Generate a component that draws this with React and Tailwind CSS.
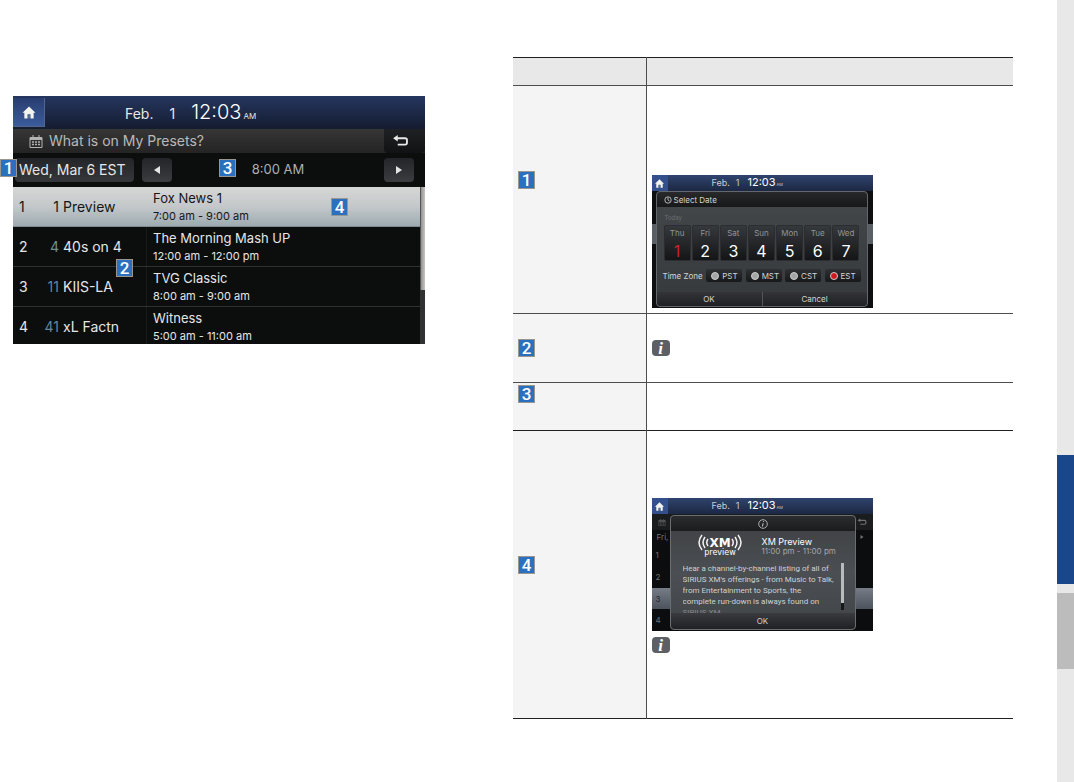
import React, { useState } from 'react';

const presets = [
  { id: 1, channel: 1, name: 'Preview', title: 'Fox News 1', time: '7:00 am - 9:00 am' },
  { id: 2, channel: 4, name: '40s on 4', title: 'The Morning Mash UP', time: '12:00 am - 12:00 pm' },
  { id: 3, channel: 11, name: 'KIIS-LA', title: 'TVG Classic', time: '8:00 am - 9:00 am' },
  { id: 4, channel: 41, name: 'xL Factn', title: 'Witness', time: '5:00 am - 11:00 am' },
];

const days = ['Thu', 'Fri', 'Sat', 'Sun', 'Mon', 'Tue', 'Wed'];
const zones = ['PST', 'MST', 'CST', 'EST'];

const Badge = ({ n, className = '' }) => (
  <span
    className={`flex h-[18px] w-[17px] items-center justify-center border border-[#999591] bg-[#2b70bf] font-['Roboto',sans-serif] text-[17px] leading-none font-medium text-white ${className}`}
  >
    {n}
  </span>
);

const InfoIcon = () => (
  <span className="flex h-4 w-[18px] items-center justify-center rounded bg-[#5c6064] font-['Liberation_Serif',serif] text-[17px] leading-none font-bold text-white italic">
    i
  </span>
);

const HomeIcon = ({ className }) => (
  <svg viewBox="0 0 14 14" className={className}>
    <path d="M7 0.5 L14 7.2 H12 V13.5 H8.6 V9 H5.4 V13.5 H2 V7.2 H0 Z" fill="#f4f4ee" />
    <path d="M5.8 9.3 H8.2 V13.5 H5.8 Z" fill="#59708e" />
  </svg>
);

const CalendarIcon = ({ className }) => (
  <svg viewBox="0 0 14 13" className={className} fill="none" stroke="#b4b4b4">
    <path d="M1 2.5 H13 V12.5 H1 Z" />
    <path d="M1 4 H13" strokeWidth="2" />
    <path d="M4 0 V3 M10 0 V3" />
    <path d="M3 7 H5 M6 7 H8 M9 7 H11 M3 9.5 H5 M6 9.5 H8 M9 9.5 H11" strokeWidth="1.3" />
  </svg>
);

const BackIcon = ({ className }) => (
  <svg viewBox="0 0 18 13" className={className} fill="none" stroke="currentColor" strokeWidth="2">
    <path d="M3 3.5 H14 Q16 3.5 16 5.5 V8.5 Q16 10.5 14 10.5 H6" />
    <path d="M6 0 L1 3.5 L6 7 Z" fill="currentColor" stroke="none" />
  </svg>
);

const SmallHeader = () => (
  <div className="flex h-4 items-center bg-linear-to-b from-[#30446e] to-[#1c2843] text-[#c5cbd9]">
    <button aria-label="Home" className="flex h-full w-4 items-center justify-center bg-[#34508c]">
      <HomeIcon className="h-[9px] w-[9px]" />
    </button>
    <div className="flex flex-1 items-baseline pl-[44px] text-[9px] leading-4">
      <span>Feb.</span>
      <span className="ml-[6px]">1</span>
      <span className="ml-[8px] text-[11px] text-white">12:03</span>
      <span className="ml-px text-[4px]">AM</span>
    </div>
  </div>
);

const PresetsScreen = () => (
  <div className="relative bg-[#0c0d0d] text-[#e6e6e6]">
    <header className="flex h-[33px] bg-linear-to-b from-[#25365f] to-[#141c30]">
      <button
        aria-label="Home"
        className="mt-[2px] flex h-[29px] w-8 items-center justify-center border-r border-b border-[#53658f] bg-linear-to-b from-[#293e70] to-[#3a5b9d]"
      >
        <HomeIcon className="h-[13px] w-[14px]" />
      </button>
      <div className="flex flex-1 items-baseline pl-[80px] leading-[33px]">
        <span className="text-sm">Feb.</span>
        <span className="ml-4 text-sm">1</span>
        <span className="ml-4 text-[20px] font-light text-white">12:03</span>
        <span className="ml-[2px] text-[8px]">AM</span>
      </div>
    </header>

    <div className="flex h-6 items-center bg-linear-to-b from-[#363636] to-[#242424] pl-4">
      <CalendarIcon className="h-[13px] w-[14px]" />
      <h1 className="ml-[6px] flex-1 text-sm text-[#b9b9b9]">What is on My Presets?</h1>
      <button
        aria-label="Back"
        className="flex h-6 w-[41px] items-center justify-center rounded-b bg-linear-to-b from-[#202124] to-[#111214] pr-2 text-[#e8e8e8]"
      >
        <BackIcon className="h-3 w-[17px]" />
      </button>
    </div>

    <div className="flex h-[34px] items-center pl-[2px] pr-[11px]">
      <button className="h-6 w-[119px] rounded bg-linear-to-b from-[#242528] to-[#36373a] pl-1 text-left text-sm">
        Wed, Mar 6 EST
      </button>
      <button
        aria-label="Earlier"
        className="ml-2 flex h-6 w-[30px] items-center justify-center rounded bg-linear-to-b from-[#242528] to-[#3c3d40]"
      >
        <svg viewBox="0 0 6 8" className="h-2 w-[6px]"><path d="M6 0 V8 L0 4 Z" fill="#e4e4e4" /></svg>
      </button>
      <span className="flex-1 text-center text-[13px] text-[#aeb0b2]">8:00 AM</span>
      <button
        aria-label="Later"
        className="flex h-6 w-[30px] items-center justify-center rounded bg-linear-to-b from-[#242528] to-[#3c3d40]"
      >
        <svg viewBox="0 0 6 8" className="h-2 w-[6px]"><path d="M0 0 V8 L6 4 Z" fill="#e4e4e4" /></svg>
      </button>
    </div>

    <div className="flex h-[157px] overflow-hidden">
      <table className="flex-1 border-collapse">
        <tbody className="block w-full">
          {presets.map((p, i) => (
            <tr
              key={p.id}
              className={`flex h-10 w-full border-b ${
                i === 0
                  ? 'border-[#7f8b91] bg-linear-to-b from-[#d6d6d5] via-[#c4c8ca] to-[#9eabb1] text-[#161616]'
                  : 'border-[#303232] text-[#e6e6e6]'
              }`}
            >
              <td className="w-6 pt-[10px] pl-[6px] text-sm">{p.id}</td>
              <td className={`w-[22px] pt-[10px] text-right text-sm ${i === 0 ? '' : i === 1 ? 'text-[#70908f]' : 'text-[#6086a0]'}`}>
                {p.channel}
              </td>
              <td className="w-[87px] pt-[10px] pl-1 text-sm">{p.name}</td>
              <td className={`flex-1 border-l pt-[2px] pl-[6px] ${i === 0 ? 'border-transparent' : 'border-[#191b1b]'}`}>
                <div className="text-[13px] leading-[19px]">{p.title}</div>
                <div className="text-[11px] leading-4">{p.time}</div>
              </td>
            </tr>
          ))}
        </tbody>
      </table>
      <div className="w-[5px] bg-[#303132]">
        <div className="h-[103px] border-l border-[#555] bg-linear-to-r from-[#929292] to-[#c9c4c0]" />
      </div>
    </div>

    <Badge n={1} className="absolute top-[63px] -left-[13px]" />
    <Badge n={3} className="absolute top-[63px] left-1/2" />
    <Badge n={2} className="absolute top-[163px] left-1/4" />
    <Badge n={4} className="absolute top-[102px] left-[318px]" />
  </div>
);

const SelectDateScreen = () => {
  const [zone, setZone] = useState('EST');

  return (
    <div className="relative h-[133px] w-[221px] overflow-hidden bg-[#0e0f11]">
      <SmallHeader />
      <div className="mt-[33px] h-5 bg-[#5a5f66]" />
      <section className="absolute top-4 right-[5px] left-1 flex h-[116px] flex-col rounded border border-[#63676b] bg-linear-to-b from-[#45484b] to-[#36393c] text-[#d4d5d7]">
        <h2 className="flex h-[15px] items-center gap-[2px] rounded-t bg-linear-to-b from-[#28292b] to-[#17181a] pl-[7px] text-[8px]">
          <svg viewBox="0 0 10 10" className="h-2 w-2" fill="none" stroke="currentColor">
            <circle cx="5" cy="5" r="4" />
            <path d="M5 2 V5 L7 6.5" />
          </svg>
          Select Date
        </h2>
        <div className="mt-[6px] pl-2 text-[6px] leading-[10px] text-[#6b6e71]">Today</div>
        <div className="mx-[7px] mt-[2px] grid grid-cols-7 gap-px">
          {days.map((d, i) => (
            <button
              key={d}
              className="flex h-[36px] flex-col items-center rounded-xs border border-[#2b2d30] bg-linear-to-b from-[#36393c] to-[#141517]"
            >
              <span className="text-[8px] leading-[14px] text-[#929497]">{d}</span>
              <span className={`text-[16px] leading-[22px] ${i === 0 ? 'text-[#c9252c]' : 'text-white'}`}>{i + 1}</span>
            </button>
          ))}
        </div>
        <div className="mt-[8px] flex items-center justify-between pr-[6px] pl-[6px]">
          <span className="text-[8px]">Time Zone</span>
          {zones.map(z => (
            <label
              key={z}
              className="flex h-[13px] w-[36px] items-center gap-[3px] rounded-xs bg-linear-to-b from-[#2e3033] to-[#17181a] pl-[5px] text-[8px]"
            >
              <input
                type="radio"
                name="zone"
                value={z}
                checked={zone === z}
                onChange={() => setZone(z)}
                className="h-2 w-2 appearance-none rounded-full border border-[#ccc] bg-[#a3a5a7] checked:bg-[#cf1820]"
              />
              {z}
            </label>
          ))}
        </div>
        <div className="mt-auto grid h-[14px] grid-cols-2 rounded-b bg-linear-to-b from-[#323437] to-[#202124] text-[8px] leading-3">
          <button>OK</button>
          <button className="border-l border-[#555]">Cancel</button>
        </div>
      </section>
    </div>
  );
};

const XmLogo = () => (
  <svg viewBox="0 0 44 25" className="h-[25px] w-11" fill="none" stroke="#f2f2f2" strokeWidth="1.5">
    <path d="M4 1 Q-2 8.500 4 16 M7 3 Q3 8.500 7 14 M10 5 Q7.500 8.500 10 12" />
    <path d="M40 1 Q46 8.500 40 16 M37 3 Q41 8.500 37 14 M34 5 Q36.500 8.500 34 12" />
    <text x="22" y="13" textAnchor="middle" fontFamily="DejaVu Sans" fontWeight="bold" fontSize="12" fill="#fff" stroke="none">XM</text>
    <text x="22" y="21" textAnchor="middle" fontFamily="DejaVu Sans" fontSize="8" fill="#fff" stroke="none">preview</text>
  </svg>
);

const XmPreviewScreen = () => (
  <div className="relative h-[133px] w-[221px] overflow-hidden bg-[#0c0d0e] text-[8px] text-[#707274]">
    <SmallHeader />
    <div className="flex h-4 items-center justify-between bg-[#1b1c1d] px-[6px]">
      <CalendarIcon className="h-[7px] w-2 opacity-50" />
      <BackIcon className="h-2 w-[10px]" />
    </div>
    <div className="flex h-[14px] items-center justify-between px-[5px]">
      <span>Fri,</span>
      <svg viewBox="0 0 6 8" className="mr-1 h-1 w-1"><path d="M0 0 V8 L6 4 Z" fill="currentColor" /></svg>
    </div>
    <div className="h-[22px] pl-1 leading-[22px]">1</div>
    <div className="h-[22px] pl-1 leading-[22px]">2</div>
    <div className="h-[21px] bg-linear-to-b from-[#767d87] to-[#4d535d] pl-1 leading-[22px] text-[#24272b]">3</div>
    <div className="h-[22px] pl-1 leading-[22px]">4</div>

    <section className="absolute top-[17px] right-[17px] left-[18px] flex h-[115px] flex-col rounded border border-[#6b6e71] bg-linear-to-b from-[#3e4043] via-[#4b4e52] to-[#424548] text-[#d0d1d3]">
      <div className="flex h-[15px] items-center justify-center rounded-t bg-linear-to-b from-[#2b2c2e] to-[#1b1c1e]">
        <svg viewBox="0 0 10 10" className="h-[10px] w-[10px]" stroke="currentColor" fill="none">
          <circle cx="5" cy="5" r="4.300" strokeWidth="0.8" />
          <path d="M5.600 2.200 L5.400 3 M5.100 4.200 L4.500 7.500" />
        </svg>
      </div>
      <div className="flex pt-[3px] pl-[27px]">
        <XmLogo />
        <div className="ml-[20px] pt-[2px]">
          <h2 className="text-[9px] leading-[11px] text-white">XM Preview</h2>
          <p className="text-[8px] leading-[9px] whitespace-nowrap text-[#a4a6a9]">11:00 pm - 11:00 pm</p>
        </div>
      </div>
      <div className="mt-[4px] flex h-[50px] pr-[11px] pl-3">
        <p className="w-0 flex-1 overflow-hidden font-['Roboto',sans-serif] text-[8px] leading-[11px] whitespace-nowrap">
          Hear a channel-by-channel listing of all of<br />
          SIRIUS XM's offerings - from Music to Talk,<br />
          from Entertainment to Sports, the<br />
          complete run-down is always found on<br />
          <span className="text-[#86898c]">SIRIUS XM</span>
        </p>
        <div className="h-[47px] w-[3px] bg-[#17181a]">
          <div className="h-10 bg-[#b8babb]" />
        </div>
      </div>
      <button className="mt-auto h-4 rounded-b bg-linear-to-b from-[#393b3e] to-[#202124] text-[8px]">OK</button>
    </section>
  </div>
);

const GuideRow = ({ n, height, badgeTop, last, children }) => (
  <tr className={`border-b ${last ? 'border-[#231f20]' : 'border-[#4d4d4f]'} ${height}`}>
    <th scope="row" className={`border-r border-[#4d4d4f] bg-[#f4f4f4] pl-[5px] align-top ${badgeTop}`}>
      <Badge n={n} />
    </th>
    <td className="pl-[5px] align-top">{children}</td>
  </tr>
);

const GuideTable = () => (
  <table className="w-full table-fixed border-collapse">
    <colgroup>
      <col className="w-[133px]" />
      <col />
    </colgroup>
    <thead>
      <tr className="h-7 border-t border-b border-t-[#231f20] border-b-[#4d4d4f] bg-[#e8e8e8]">
        <th scope="col" className="border-r border-[#4d4d4f]" />
        <th scope="col" />
      </tr>
    </thead>
    <tbody>
      <GuideRow n={1} height="h-[228px]" badgeTop="pt-[85px]">
        <div className="pt-[89px]"><SelectDateScreen /></div>
      </GuideRow>
      <GuideRow n={2} height="h-[69px]" badgeTop="pt-[25px]">
        <div className="pt-[26px]"><InfoIcon /></div>
      </GuideRow>
      <GuideRow n={3} height="h-[48px]" badgeTop="pt-[2px]" last />
      <GuideRow n={4} height="h-[288px]" badgeTop="pt-[125px]" last>
        <div className="flex flex-col gap-[6px] pt-[67px]">
          <XmPreviewScreen />
          <InfoIcon />
        </div>
      </GuideRow>
    </tbody>
  </table>
);

export default function App() {
  return (
    <div className="flex min-h-screen bg-white font-['Inter',sans-serif]">
      <main className="grid flex-1 grid-cols-[412fr_500fr] items-start gap-[88px] pr-11 pl-[13px]">
        <div className="pt-24">
          <PresetsScreen />
        </div>
        <div className="pt-[57px]">
          <GuideTable />
        </div>
      </main>
      <aside className="w-[17px] bg-[#e8e8e8] pt-[455px]">
        <div className="h-[129px] bg-[#19478a]" />
        <div className="mt-[9px] h-[76px] bg-[#bcbcbc]" />
      </aside>
    </div>
  );
}
